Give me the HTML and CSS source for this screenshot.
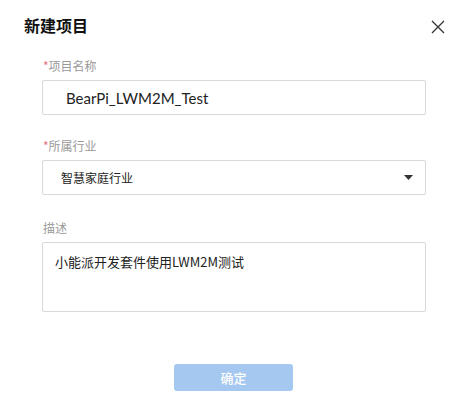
FILE: index.html
```html
<!DOCTYPE html>
<html>
<head>
<meta charset="utf-8">
<link rel="stylesheet" href="styles.css">
</head>
<body>
<div class="dialog">
  <div class="header">
    <div class="title">新建项目</div>
    <svg class="close" width="14" height="14" viewBox="0 0 14 14"><path d="M1 1 L13 13 M13 1 L1 13" stroke="#333" stroke-width="1.3" fill="none"/></svg>
  </div>
  <div class="form">
    <div class="field f1">
      <div class="label"><span class="req">*</span>项目名称</div>
      <div class="input name">BearPi_LWM2M_Test</div>
    </div>
    <div class="field f2">
      <div class="label"><span class="req">*</span>所属行业</div>
      <div class="input select"><span>智慧家庭行业</span><svg width="9" height="5" viewBox="0 0 9 5"><path d="M0 0 H9 L4.5 5 Z" fill="#333"/></svg></div>
    </div>
    <div class="field f3">
      <div class="label">描述</div>
      <div class="input area">小能派开发套件使用LWM2M测试</div>
    </div>
  </div>
  <div class="footer">
    <button class="ok">确定</button>
  </div>
</div>
</body>
</html>
```
FILE: styles.css
```css
html, body { margin: 0; padding: 0; background: #fff; }
body { font-family: "Noto Sans CJK SC", "Open Sans", sans-serif; color: #252b3a; }
.dialog { width: 464px; height: 408px; box-sizing: border-box; padding: 13px 22px 0 24px; }
.header { display: flex; justify-content: space-between; align-items: center; height: 24px; }
.title { font-size: 16px; font-weight: bold; color: #111; line-height: 24px; }
.close { margin-right: -3px; margin-top: 3px; }
.form { padding: 0 16px 0 18px; margin-top: 19px; }
.f1 { margin-bottom: 21px; }
.f2 { margin-bottom: 23px; }
.f3 { margin-bottom: 0; }
.label { font-size: 12px; color: #999; line-height: 20px; margin-bottom: 4px; padding-left: 1px; }
.req { color: #e8707a; }
.input { box-sizing: border-box; border: 1px solid #d9d9d9; border-radius: 2px; height: 35px; display: flex; align-items: center; color: #222; }
.name { font-family: "Lato", "Noto Sans CJK SC", sans-serif; font-size: 15px; padding-left: 23px; }
.select { font-size: 12px; padding: 0 12px 0 18px; justify-content: space-between; }
.area { height: 70px; align-items: flex-start; font-size: 13px; padding: 9px 12px; line-height: 20px; }
.footer { display: flex; justify-content: center; margin-top: 52px; padding-left: 1px; }
.ok { width: 119px; height: 27px; border: none; border-radius: 3px; background: #a4c8ef; color: #fff; font-family: "Noto Sans CJK SC", sans-serif; font-size: 13px; font-weight: 500; }
```
